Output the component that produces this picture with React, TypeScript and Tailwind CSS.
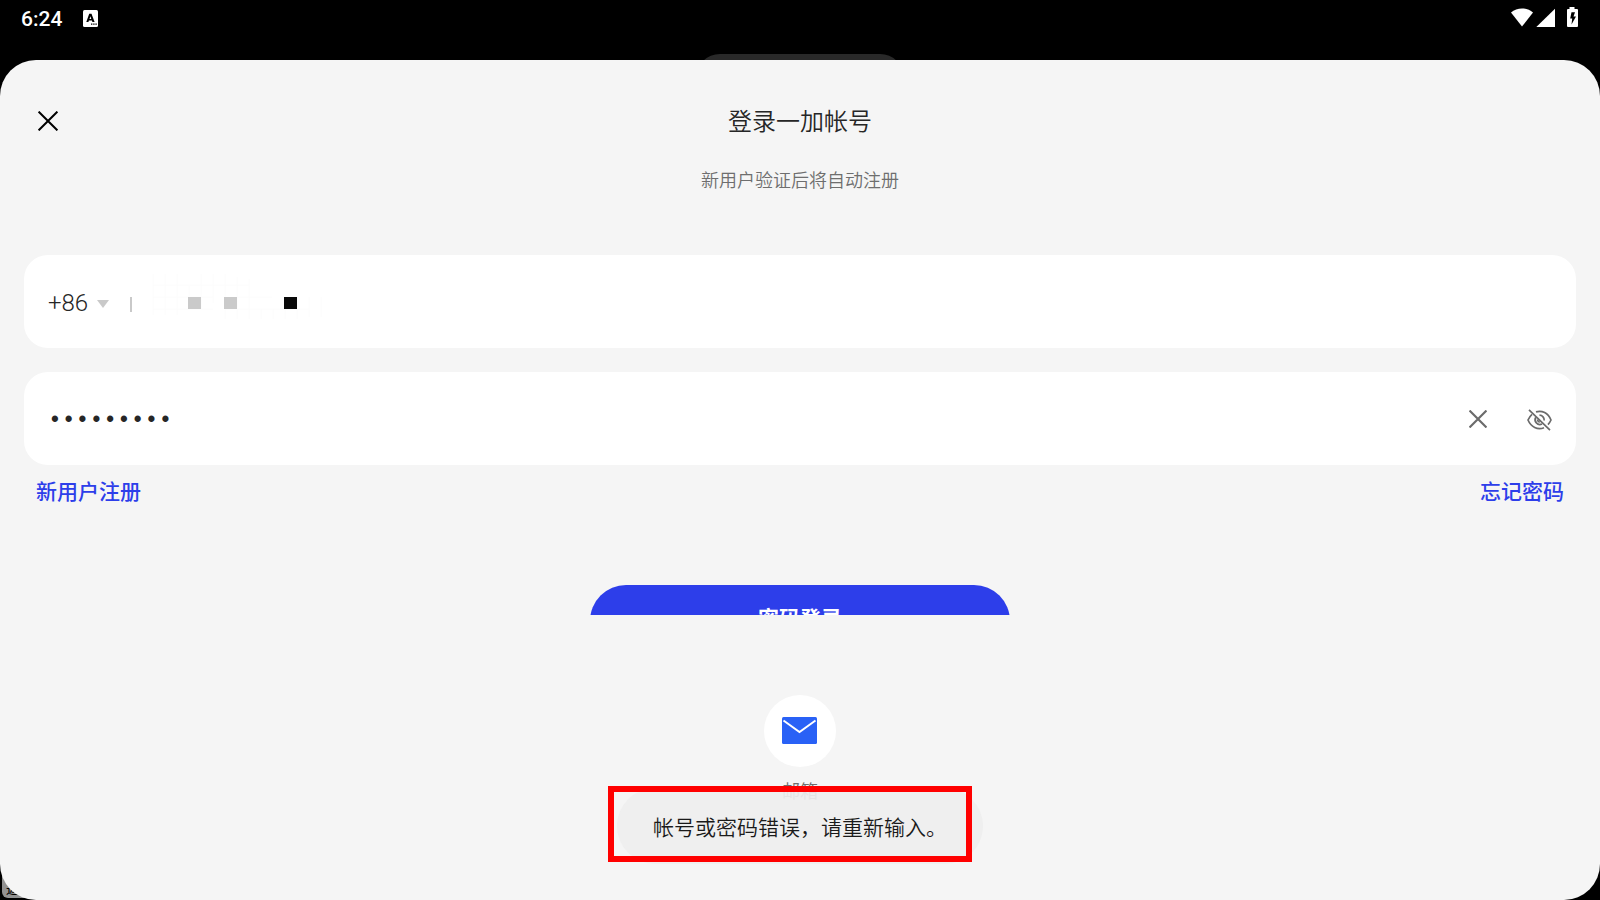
import { useState } from "react";

const mosaicLines =
  "M9 5V46M21 5V46M33 5V46M45 17V40M57 5V40M69 5V34M81 5V50M93 8V50M105 10V50M117 40V50M129 40V50M141 36V50M153 28V50M165 28V48M177 28V48M9 16H105M9 28H69M93 28H128M9 40H69M81 40H165";

function CloseIcon({ className, width }: { className: string; width: number }) {
  return (
    <svg viewBox="0 0 20 20" className={className} fill="none" stroke="currentColor" strokeWidth={width} aria-hidden="true">
      <path d="M0.6 0.6 19.4 19.4M19.4 0.6 0.6 19.4" />
    </svg>
  );
}

function StatusBar() {
  return (
    <header className="flex h-[60px] items-start justify-between overflow-hidden pr-[22px] pl-[21px]">
      <div className="flex h-[37px] items-center gap-[21px]">
        <time className="font-[Roboto] text-[21px] leading-6 font-medium text-white">6:24</time>
        <svg viewBox="0 0 15 17" className="h-[17px] w-[15px]" aria-hidden="true">
          <rect width="15" height="17" rx="1.5" fill="#fff" />
          <path
            fillRule="evenodd"
            d="M6.2 3.800h2.300L11.600 12H9.400L8.900 10.500H5.900L5.400 12H3.300zM7.400 6.200 6.500 8.900H8.300z"
            fill="#000"
          />
          <path d="M8 13.4h1.4v1.4H8zM10.2 13.4h1.4v1.4h-1.4zM12.4 13.4h1.4v1.4h-1.4z" fill="#000" />
        </svg>
      </div>
      <div className="flex pt-[7px]">
        <svg viewBox="0 0 68 20" className="h-5 w-[68px]" fill="#fff" aria-hidden="true">
          <path d="M12 19.5 1 5.6C7 0 17 0 23 5.6z" />
          <path d="M26.3 20 45 1.8V20z" />
          <path
            fillRule="evenodd"
            d="M59.5 0h5v2H67q1 0 1 1V19q0 1-1 1H58q-1 0-1-1V3q0-1 1-1h1.5zM61.5 5.3 60.2 11.5H62.2L61.5 17.5 66 9.5H63.5L65 5.3z"
          />
        </svg>
      </div>
    </header>
  );
}

export default function App() {
  const [password, setPassword] = useState("123456789");
  const [shown, setShown] = useState(false);

  return (
    <div className="relative flex min-h-screen flex-col bg-black font-['Roboto','Noto_Sans_CJK_SC',sans-serif] text-[#262626]">
      <StatusBar />
      <div className="absolute top-[54px] left-1/2 h-12 w-[208px] -translate-x-1/2 rounded-3xl bg-[#292929]" />
      <div className="absolute bottom-[2px] left-[2px] h-9 w-9 overflow-hidden rounded-md bg-[#929292] pt-[19px] pl-1 text-[14px] leading-4 text-black">
        返
      </div>

      <main className="relative flex flex-1 flex-col rounded-[36px] bg-[#f5f5f5] px-6 pt-11">
        <div className="grid grid-cols-[36px_1fr_36px] items-center">
          <button type="button" aria-label="关闭" className="flex h-9 items-center justify-end pr-[2px] pb-[2px] text-black">
            <CloseIcon className="h-5 w-5" width={2} />
          </button>
          <h1 className="text-center text-[24px] leading-9 font-[350]">登录一加帐号</h1>
        </div>
        <p className="mt-[27px] text-center text-[18px] leading-7 font-[350] text-[#6e6e6e]">新用户验证后将自动注册</p>

        <form className="mt-[60px] flex flex-col" onSubmit={(e) => e.preventDefault()}>
          <div className="flex h-[93px] items-center rounded-3xl bg-white px-6">
            <button type="button" aria-label="国家或地区代码 +86" className="flex items-center gap-[9px] pt-[2px] text-[24px] leading-8 font-[350]">
              +86
              <svg viewBox="0 0 12 8" className="mt-[2px] h-2 w-3" fill="#c9c9c9" aria-hidden="true">
                <path d="M0 0h12L6 8z" />
              </svg>
            </button>
            <span className="mt-[6px] ml-[21px] h-[15px] w-[2px] bg-[#c9c9c9]" />
            <div className="relative ml-3 flex h-[60px] flex-1">
              <input type="tel" aria-label="手机号" className="w-full bg-transparent text-[24px] outline-none" />
              <svg viewBox="0 3 190 60" className="pointer-events-none absolute top-0 left-0 h-[60px] w-[190px]" aria-hidden="true">
                <path d={mosaicLines} stroke="#fcfcfc" fill="none" />
                <path d="M44 28h13v12H44zM80 28h13v12H80z" fill="#cacaca" />
                <path d="M140 28h13v12H140z" fill="#090909" />
              </svg>
            </div>
          </div>

          <div className="mt-6 flex h-[93px] items-center gap-10 rounded-3xl bg-white px-6">
            <input
              type={shown ? "text" : "password"}
              aria-label="密码"
              value={password}
              onChange={(e) => setPassword(e.target.value)}
              className="min-w-0 flex-1 bg-transparent pt-[6px] font-['Liberation_Mono',monospace] text-[23px] outline-none"
            />
            <button type="button" aria-label="清除" onClick={() => setPassword("")} className="text-[#6b6b6b]">
              <CloseIcon className="h-[18px] w-[18px]" width={2.4} />
            </button>
            <button type="button" aria-label="显示密码" onClick={() => setShown(!shown)} className="pt-[2px] text-[#6b6b6b]">
              <svg viewBox="0 0 25 22" className="h-[22px] w-[25px]" fill="none" stroke="currentColor" strokeWidth="1.7" aria-hidden="true">
                <path d="M2 0.8 23 21.2" />
                <path d="M9 2.9C15 1 21 4 24 11 23.2 12.8 22.2 14.3 21 15.6M17 18.7C10.5 21.3 4 18 1 11 2 8.7 3.4 6.7 5 5.3" />
                <path d="M12.5 6.2A4.8 4.8 0 0 1 17.2 11.5M15 15A4.8 4.8 0 0 1 8.8 8.2" />
                <path d="M10.6 10.5A2 2 0 0 0 12.8 12.8" />
              </svg>
            </button>
          </div>

          <div className="flex justify-between px-3 pt-[11px] text-[21px] leading-8 font-medium text-[#2d3eea]">
            <a href="#register">新用户注册</a>
            <a href="#forgot">忘记密码</a>
          </div>

          <div className="mt-[77px] h-[30px] overflow-hidden">
            <button type="submit" className="mx-auto block h-[72px] w-[420px] rounded-[36px] bg-[#2d3eea] pb-[2px] text-[21px] font-bold text-white">
              密码登录
            </button>
          </div>
        </form>

        <button type="button" className="mx-auto mt-20 flex flex-col items-center gap-3 text-[18px] leading-[26px] font-[350] text-[#6e6e6e]">
          <span className="flex h-[72px] w-[72px] items-center justify-center rounded-full bg-white pr-px pb-[2px]">
            <svg viewBox="0 0 35 27" className="h-[27px] w-[35px]" aria-hidden="true">
              <rect width="35" height="27" rx="1.5" fill="#2961f6" />
              <path d="M1.5 3.5 17.5 15 33.5 3.5" fill="none" stroke="#fff" strokeWidth="2" />
            </svg>
          </span>
          邮箱
        </button>

        <div role="alert" className="absolute bottom-9 left-1/2 flex h-[76px] -translate-x-1/2 items-center rounded-full bg-[#eeeeee]/92 px-9 pt-1 text-[21px] leading-8 font-[350] whitespace-nowrap text-[#1a1a1a]">
          帐号或密码错误，请重新输入。
          <span className="absolute -top-[2px] right-[11px] -left-[9px] h-[76px] border-[6px] border-[#ff0000]" />
        </div>
      </main>
    </div>
  );
}
